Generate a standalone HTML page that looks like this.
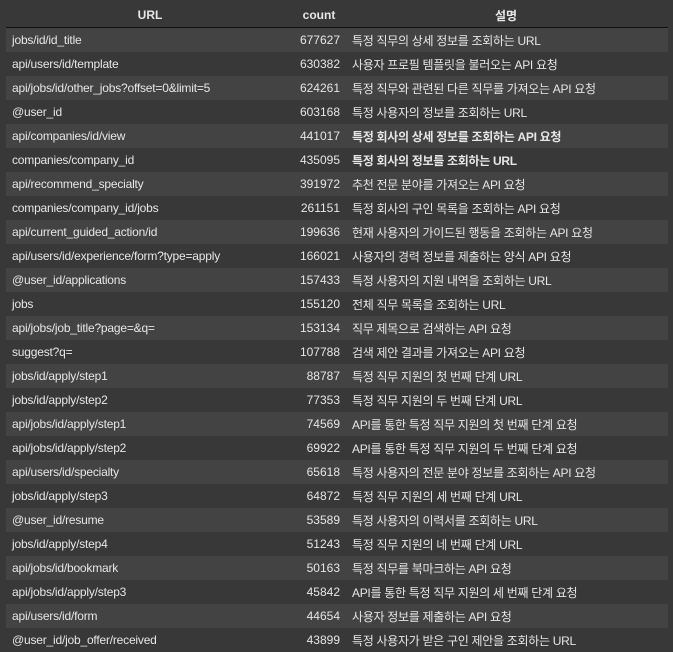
<!DOCTYPE html>
<html><head><meta charset="utf-8"><style>
body{margin:0;background:#383838;width:673px;height:651px;overflow:hidden;font-family:"Liberation Sans","Noto Sans CJK KR",sans-serif;font-size:12px;color:#e6e6e6}
table{position:absolute;left:6px;top:3px;width:662px;border-collapse:collapse;table-layout:fixed}
th{height:24px;font-weight:bold;border-bottom:1px solid #111;padding:0;font-size:12px;text-align:center}
td{height:24px;padding:0;white-space:nowrap;overflow:hidden}
tr:nth-child(odd) td{background:#434343}
td.u{padding-left:6px;letter-spacing:-0.2px}
td.c{text-align:right;padding-right:4px}
td.d{padding-left:8px;font-size:12px;letter-spacing:-0.3px}
.b{font-weight:bold}
</style></head><body>
<table>
<colgroup><col style="width:288px"><col style="width:50px"><col style="width:324px"></colgroup>
<thead><tr><th>URL</th><th>count</th><th>설명</th></tr></thead>
<tbody>
<tr><td class="u">jobs/id/id_title</td><td class="c">677627</td><td class="d">특정 직무의 상세 정보를 조회하는 URL</td></tr>
<tr><td class="u">api/users/id/template</td><td class="c">630382</td><td class="d">사용자 프로필 템플릿을 불러오는 API 요청</td></tr>
<tr><td class="u">api/jobs/id/other_jobs?offset=0&amp;limit=5</td><td class="c">624261</td><td class="d">특정 직무와 관련된 다른 직무를 가져오는 API 요청</td></tr>
<tr><td class="u">@user_id</td><td class="c">603168</td><td class="d">특정 사용자의 정보를 조회하는 URL</td></tr>
<tr><td class="u">api/companies/id/view</td><td class="c">441017</td><td class="d b">특정 회사의 상세 정보를 조회하는 API 요청</td></tr>
<tr><td class="u">companies/company_id</td><td class="c">435095</td><td class="d b">특정 회사의 정보를 조회하는 URL</td></tr>
<tr><td class="u">api/recommend_specialty</td><td class="c">391972</td><td class="d">추천 전문 분야를 가져오는 API 요청</td></tr>
<tr><td class="u">companies/company_id/jobs</td><td class="c">261151</td><td class="d">특정 회사의 구인 목록을 조회하는 API 요청</td></tr>
<tr><td class="u">api/current_guided_action/id</td><td class="c">199636</td><td class="d">현재 사용자의 가이드된 행동을 조회하는 API 요청</td></tr>
<tr><td class="u">api/users/id/experience/form?type=apply</td><td class="c">166021</td><td class="d">사용자의 경력 정보를 제출하는 양식 API 요청</td></tr>
<tr><td class="u">@user_id/applications</td><td class="c">157433</td><td class="d">특정 사용자의 지원 내역을 조회하는 URL</td></tr>
<tr><td class="u">jobs</td><td class="c">155120</td><td class="d">전체 직무 목록을 조회하는 URL</td></tr>
<tr><td class="u">api/jobs/job_title?page=&amp;q=</td><td class="c">153134</td><td class="d">직무 제목으로 검색하는 API 요청</td></tr>
<tr><td class="u">suggest?q=</td><td class="c">107788</td><td class="d">검색 제안 결과를 가져오는 API 요청</td></tr>
<tr><td class="u">jobs/id/apply/step1</td><td class="c">88787</td><td class="d">특정 직무 지원의 첫 번째 단계 URL</td></tr>
<tr><td class="u">jobs/id/apply/step2</td><td class="c">77353</td><td class="d">특정 직무 지원의 두 번째 단계 URL</td></tr>
<tr><td class="u">api/jobs/id/apply/step1</td><td class="c">74569</td><td class="d">API를 통한 특정 직무 지원의 첫 번째 단계 요청</td></tr>
<tr><td class="u">api/jobs/id/apply/step2</td><td class="c">69922</td><td class="d">API를 통한 특정 직무 지원의 두 번째 단계 요청</td></tr>
<tr><td class="u">api/users/id/specialty</td><td class="c">65618</td><td class="d">특정 사용자의 전문 분야 정보를 조회하는 API 요청</td></tr>
<tr><td class="u">jobs/id/apply/step3</td><td class="c">64872</td><td class="d">특정 직무 지원의 세 번째 단계 URL</td></tr>
<tr><td class="u">@user_id/resume</td><td class="c">53589</td><td class="d">특정 사용자의 이력서를 조회하는 URL</td></tr>
<tr><td class="u">jobs/id/apply/step4</td><td class="c">51243</td><td class="d">특정 직무 지원의 네 번째 단계 URL</td></tr>
<tr><td class="u">api/jobs/id/bookmark</td><td class="c">50163</td><td class="d">특정 직무를 북마크하는 API 요청</td></tr>
<tr><td class="u">api/jobs/id/apply/step3</td><td class="c">45842</td><td class="d">API를 통한 특정 직무 지원의 세 번째 단계 요청</td></tr>
<tr><td class="u">api/users/id/form</td><td class="c">44654</td><td class="d">사용자 정보를 제출하는 API 요청</td></tr>
<tr><td class="u">@user_id/job_offer/received</td><td class="c">43899</td><td class="d">특정 사용자가 받은 구인 제안을 조회하는 URL</td></tr>
</tbody></table>
</body></html>
